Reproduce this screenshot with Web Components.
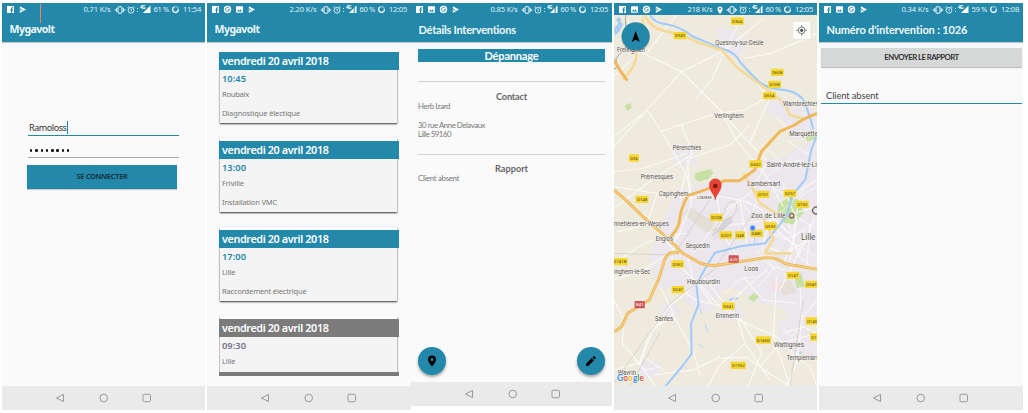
<!DOCTYPE html>
<html lang="fr"><head><meta charset="utf-8"><title>Mygavolt</title>
<style>
html,body{margin:0;background:#fff;height:413px;overflow:hidden}
body{font-family:"Noto Sans","Open Sans",sans-serif;font-size:8px}
</style></head><body>
<app-gallery></app-gallery>

<template id="map">
<style>:host{display:block;height:371px}svg{display:block;width:203px;height:371px}</style>
<svg viewBox="12 45 609 1113" preserveAspectRatio="none" font-family="Roboto,sans-serif">
<rect x="12" y="45" width="609" height="1113" fill="#eeebde"/>
<g fill="#ebe7ec">
<path d="M322 80l50 15 38 45-20 25-45 5-15-40zM470 300l40-5 60 10 51 30v80l-70 5-30-60-50-20z"/>
<path d="M190 430l60 5 15 50-40 20-40-25zM200 570l90-20 110-10 60-60 60-10 101-60v560l-60 10-50-60-60-10-60-40-50-10-40 80-60-20-40-50-60-10-20-90 20-60z"/>
<path d="M140 705l45 10 25 40-25 20-50-20zM155 915l40-10 20 30-35 25-30-15zM90 1085l50-5 20 30-25 25-50-10zM335 910l50 5 20 35-30 15-50-20zM500 960l60-10 61 60v60l-110-20zM480 820l141-20v100l-100-5-30-30zM370 170l10-50 30-8z"/>
</g>
<g fill="#e3dfd6"><path d="M220 640l20-18 70 40 10 30-35 5zM500 850l40-10 20 35-40 12z"/></g>
<path fill="#f5dfe5" d="M480 845l25-5 10 25-25 8z"/>
<g fill="#c7e0a4"><path d="M43 318l18-10 4 15-12 9zM257 518l45-11 8 12-15 18-30 8-12-12zM505 610l35-18 28 8 14 38-32 35-28-5-20-22zM412 895l20-16 16 11-18 15zM585 400l20-10 16 25-30 10zM555 840l18-22 12 42-25 5z"/></g>
<path fill="#a9cdf0" d="M12 85l18-22 10 10-12 22-14 12zM18 60l7-10 10 8-9 12zM355 898l25-8 5 8-25 5zM566 1060l6-8 3 10z"/>
<g fill="none" stroke="#fbfaf5" stroke-width="3.2" stroke-linejoin="round">
<path d="M12 228L90 155 215 215 330 330 400 410 470 480M90 155L45 45M110 160L200 45M215 215L345 150 400 45M215 215L110 330 12 440M345 150l-40 90-50 60M345 150L460 55M405 175l80-15 136-60M12 410l100-80 40 60 80 140 12 80M150 395l60-20 110-35 80-10 80-40M330 330l50 90 90 110 50 90M240 475l120-40 60-60M440 250l40 45-60 130M215 375l30 80-35 130M12 560l130 20 100 15 70-10 100 20 70 40 60 60"/>
<path d="M12 515l90-10 130-45M230 470l15 140-45 110M12 625l120-90 120-75M12 790l90-60 60-20M100 640l90 110-90 60-88 30M200 700l-15 80 70 60 50 70M140 585l-30 90-90 20M320 585l20 120 40 60M390 600l20 130M470 490l-50 90-75 50M480 660l-25 90 40 60M520 560l40 100-20 120M621 620l-140 40-160 20M621 710l-100 50-50-20M500 690l70 60-60 120M460 550l80 40 80-50"/>
<path d="M12 900l30 60-5 70 50 60 40-110 50-60 60-50M87 1090l50 68M87 1090L12 1110M130 980l60-35 60 110 20 70M215 870l40 30 90 20 50 40 60 100-40 98M150 860l40 80-60 50-40 100M260 840l60 70 65 50 115 50 50 50 71 20M280 830l70 90M350 920l60-60 60-50M385 960l20 70 75 110M405 1030l-80 70-30 58M330 1075l80-3 70 50 60 36M130 1125l120-15 80-40M500 830l-10 180 50 148M520 1000l60-20 41 20M570 860l5 100-15 130-30 68M570 960l51-60M450 1100l60-70 111-30M400 830l60 70 100 10M540 1060l60 40 21 58M160 1110l-60-40"/>
</g>
<g fill="none" stroke="#fff" stroke-width="2">
<path d="M400 610l20 30 80 10 80-80M430 630l40-100 80-60M420 690l40-10 60 40 70-30M550 690l20-100 51-30M500 700l121 70M535 670l30 100 56 40M560 650l61 40M550 710l71-50M565 770l50-120M590 800l10-120M520 790l40-90M410 810l60-50 70 80M440 750l50 60M445 860l50-60 60 20M530 420l60 40 31-20M500 350l50 60 71-10M450 430l70 60 60-10M345 880l40-40 50-10M515 980l30 30 30-30M75 1080l30 30 50-10M110 650l40 60 80-10M250 760l70-90 60-60M230 760l20 80"/>
</g>
<g fill="none" stroke="#cac7c4" stroke-width="2"><path d="M12 1150L180 910 310 810 430 640M60 1158l90-160M540 1158l40-260M12 760l180 5 110-170"/><path d="M306 708l38-72q5-30 25-31 16 3 9 28l-31 47-34 38"/></g>
<path d="M306 708l38-50 20-10 4 17-31 26z" fill="#d5d3d7"/>
<path d="M47 45l1 95-30 35 2 28-8 4" fill="none" stroke="#777" stroke-width="2"/>
<g fill="none" stroke="#a0cafa" stroke-width="6" stroke-linejoin="round">
<path d="M120 45q12 24 50 28 42 7 75 35l95 40q35 8 50 38 28 32 60 62 28 20 75 22 46 8 60 38l20 60 4 20M621 405l-18 48-17 85-40 50-16 60-40 50-25 32-70 8-80 20-25 40-17 30-14 25 7 60-23 58 2 90-30 40-52 62"/>
<path stroke-width="2" d="M433 735l2-35M270 925l4 18M285 970l8 28M262 1030l20 14M225 1100l8 8"/>
</g>
<g fill="none" stroke-linejoin="round">
<path stroke="#f5d998" stroke-width="8" d="M103 45q20 37 53 46 68 14 105 35 45 15 75 25l42 49 54 40 60 44 35 30 10 30 42 12M97 55q8 40-17 95 2 50-42 88M400 520l25 40 25 50 65 40M460 655l30 60-25 45 80 0"/>
<path stroke="#efb95b" stroke-width="9" d="M12 180q18 35 40 62M621 340q-43 16-67 35l-45 20-55 60-20 55-46 32-45 0-55 27-55 18q-22 40-25 80-7 25-28 45M12 570q35 28 80 73l100 90 25 26 53 30q30 12 60 5l130-20q40-5 65 17l142 25M207 760q-35-12-45 25l-14 47-30 68-65 40-18 40-22 15"/>
<path stroke="#fbe1a2" stroke-width="2" d="M12 570q35 28 80 73l100 90 25 26 53 30q30 12 60 5l130-20q40-5 65 17l142 25M207 760q-35-12-45 25l-14 47-30 68-65 40-18 40-22 15"/>
</g>
<g id="towns" fill="#55514e" stroke="#f6f4ef" stroke-width="3" paint-order="stroke" font-size="19"></g>
<g id="roads" font-size="13" text-anchor="middle"></g>
<circle cx="545" cy="647" r="9" fill="#8d7775"/><circle cx="545" cy="647" r="4" fill="#e8dedc"/><path d="M621 627a10 10 0 1 0 0 17" transform="translate(2 -4)" fill="none" stroke="#75605c" stroke-width="4"/>
<circle cx="428" cy="684" r="8" fill="#4083ee" stroke="#bdd6fa" stroke-width="2"/>
<path d="M316 600c-3-20-18-24-18-46a18 18 0 0 1 36 0c0 22-15 26-18 46z" fill="#e94335" stroke="#c33127"/><circle cx="316" cy="558" r="7" fill="#7a1b15"/>
<rect x="548" y="64" width="55" height="54" rx="2" fill="#fbfbfa" stroke="#d2d0ca"/>
<g fill="none" stroke="#666" stroke-width="2.6"><circle cx="575" cy="91" r="10"/><path d="M575 75v6M575 101v6M559 91h6M585 91h6"/></g><circle cx="575" cy="91" r="5" fill="#555"/>
<text x="21" y="1142" font-size="26" font-weight="700" textLength="81" lengthAdjust="spacingAndGlyphs" stroke="#fff" stroke-width="3" paint-order="stroke" font-family="Lato,sans-serif"><tspan fill="#4285f4">G</tspan><tspan fill="#ea4335">o</tspan><tspan fill="#fbbc05">o</tspan><tspan fill="#4285f4">g</tspan><tspan fill="#34a853">l</tspan><tspan fill="#ea4335">e</tspan></text>
<circle cx="77" cy="112" r="43" fill="#0003"/><circle cx="77" cy="109" r="42" fill="#2388a9"/><path d="M77 93l12 33-12-7-12 7z" fill="#000"/>
</svg></template>

<script>
const define=(name,css,html,after)=>customElements.define(name,class extends HTMLElement{
  connectedCallback(){
    if(this.shadowRoot)return;
    const root=this.attachShadow({mode:'open'});
    root.innerHTML=`<style>*{box-sizing:border-box}${css}</style>`+(typeof html==='function'?html(this):html);
    if(after)after(this,root);
  }
});

/* One line of text whose tracking is adjusted to span the width in "w". */
define('fit-text',':host{display:inline-block;white-space:pre;line-height:1;flex:none}','<span><slot></slot></span>',(el,root)=>{
  const span=root.querySelector('span'),w=+el.getAttribute('w');
  const natural=span.getBoundingClientRect().width;
  if(w&&natural){span.style.letterSpacing=(w-natural)/el.textContent.length+'px';el.style.width=w+'px'}
});

const glyphs={
  f:'<path fill="#fff" d="M0 0h7v7H5.2V4.5h.9V3.4h-.9v-.6c0-.4.2-.5.9-.5V1.2C4.700 1.100 4 1.600 4 2.700v.7h-.8v1.100H4V7H0z"/>',
  g:'<circle cx="3.500" cy="3.500" r="3.700" fill="#fff"/><path d="M5.200 2.300A2 2 0 1 0 5.500 3.700H3.700" fill="none" stroke="#2388a9" stroke-width=".9"/>',
  i:'<rect y=".3" width="7" height="6.500" rx=".7" fill="#fff"/><path d="M1 5.500l1.500-2 1 1.200 1.100-1.500 1.500 2.300z" fill="#2388a9"/>',
  p:'<path d="M.8.2L7 3.500.8 6.900z" fill="#fff"/><path d="M.5 2l3 2.500M2.200 3.400L.6 5" stroke="#2388a9" stroke-width=".8" fill="none"/>'
};
define('status-bar',
 ':host{display:flex;height:12px;padding:0 4px 0 5px;align-items:center;justify-content:space-between;color:#e2f1f5;font-size:7.600px;background:#2388a9}div{display:flex;align-items:center;padding-top:1px}.l{gap:5px}svg{display:block;overflow:visible;flex:none}',
 el=>{const a=n=>el.getAttribute(n);return `<div class="l">${[...a('icons')].map(k=>`<svg width="7" height="7">${glyphs[k]}</svg>`).join('')}</div>
 <div><fit-text w="${a('sw')||27}">${a('speed')}</fit-text>
 ${el.hasAttribute('pin')?'<svg width="6" height="8" style="margin-left:4px"><path d="M3 8C1 5.500.5 4.500.5 3a2.500 2.500 0 0 1 5 0C5.500 4.500 5 5.500 3 8z" fill="#fff"/><circle cx="3" cy="2.900" r=".9" fill="#2388a9"/></svg>':''}
 <svg width="10" height="8" style="margin-left:4px" fill="none" stroke="#fff"><rect x="3" y=".8" width="4" height="6.400" rx=".7"/><path d="M1.700 2v4M8.300 2v4M.3 3.200v1.600M9.700 3.200v1.600" stroke-width=".9"/></svg>
 <svg width="8" height="8" style="margin-left:2px" fill="none" stroke="#e5f3f6" stroke-width=".9"><circle cx="4" cy="4.300" r="2.900"/><path d="M4 2.500v2l1 .6M.5 1.700L2 .5M7.500 1.700L6 .5"/></svg>
 <svg width="14" height="9" style="margin-left:2px"><path d="M.5 3v1M.5 6v1" stroke="#d5eaf0"/><path d="M13.500 .5v7.500H6z" fill="#fff"/>${el.hasAttribute('weak')?'<path d="M11.200 1v7" stroke="#2388a9" stroke-width="1"/>':''}<text x="3" y="4.300" font-size="4.800" font-weight="700" fill="#fff" textLength="5.500">4G</text></svg>
 <fit-text w="15.500" style="margin-left:3px">${a('level')} %</fit-text>
 <svg width="7" height="7" style="margin-left:3px" fill="none"><circle cx="3.500" cy="3.500" r="2.900" stroke="#88c0d1" stroke-width="1.200"/><path d="M2 1A2.900 2.900 0 1 0 6.400 3.500" stroke="#fff" stroke-width="1.200"/></svg>
 <fit-text w="18" style="margin-left:4px">${a('time')}</fit-text></div>`});

define('title-bar',':host{display:flex;height:27px;align-items:center;padding:1px 8px 0 7.500px;background:#2388a9;color:#f0f8fa;font-size:10.500px;font-weight:700;box-shadow:0 1px 1px #0003;position:relative}','<slot></slot>');

define('nav-bar',':host{display:block;height:24px;background:#eaeaea;flex:none}svg{display:block}',
 '<svg width="204" height="24" fill="none" stroke="#999" stroke-width="1"><path d="M54.500 12l7-3.600v7.200z" stroke-linejoin="round"/><circle cx="101.700" cy="12" r="3.800"/><rect x="141" y="8.300" width="7.500" height="7.400" rx="1.200"/></svg>');

define('phone-screen',':host{display:flex;flex-direction:column;height:407px;background:#fafafa;position:relative;overflow:hidden;flex:none}main{flex:1;min-height:0;overflow:hidden}',
 '<slot name="top"></slot><main><slot></slot></main><nav-bar></nav-bar>');

define('login-form',
 ':host{display:block;padding:78px 0 0 25px;color:#333}.f{display:flex;width:151px;align-items:center;padding-left:1px;margin-left:1px}.u{height:16px;border-bottom:1px solid #2388a9;font-size:9px}.u i{width:1px;height:13px;background:#2388a9}.p{height:22px;border-bottom:1px solid #aaa;gap:2.900px;padding:8px 0 0 2px}.p i{width:2.400px;height:2.400px;border-radius:50%;background:#111}.b{display:flex;align-items:center;justify-content:center;width:150px;height:24px;margin-top:7px;background:#2388a9;color:#102a33;font-size:7.200px;font-weight:600;box-shadow:0 1px 1px #0003}',
 '<div class="f u"><fit-text w="37.500">Ramoloss</fit-text><i></i></div><div class="f p">'+'<i></i>'.repeat(8)+'</div><div class="b"><fit-text w="51">SE CONNECTER</fit-text></div>');

define('visit-card',
 ':host{display:flow-root;height:71px;margin:0 0 18px}.c{position:relative;margin:0 2px 0 1px;height:71px;background:#f4f4f4;box-shadow:0 1px 2px #0008,0 1px 1px #0005}:host(.next) .c{border-top:3px solid #fdfdfd;height:74px;margin-top:-3px}header{display:flex;align-items:center;height:18px;margin:0 -2px 0 -1px;padding-left:3px;background:var(--tone,#2388a9);color:#fff;font-size:10.800px;font-weight:600}.r{display:flex;align-items:center;padding-left:2px;height:15px;color:#777;font-size:7.500px}.t{height:17px;font-size:9.300px;font-weight:600;color:var(--time,#2388a9)}.d{margin-top:4px}',
 el=>`<div class="c"><header><fit-text w="106.500">vendredi 20 avril 2018</fit-text></header><div class="r t"><fit-text w="24">${el.getAttribute('time')}</fit-text></div><div class="r"><fit-text w="${el.getAttribute('cw')}">${el.getAttribute('city')}</fit-text></div><div class="r d"><fit-text w="${el.getAttribute('dw')}">${el.getAttribute('job')}</fit-text></div></div>`);

define('visit-list',
 ':host{display:block;padding:10px 12px 0}.w{height:326px;overflow:hidden;margin:0 -3px;padding:0 3px}.last{height:60px;overflow:hidden;border-bottom:4px solid #7b7b7b;margin-top:-3px;padding-top:3px;--tone:#7b7b7b;--time:#77708f}',
 `<div class="w"><visit-card time="10:45" city="Roubaix" cw="27" job="Diagnostique électique" dw="78"></visit-card>
 <visit-card class="next" time="13:00" city="Friville" cw="22" job="Installation VMC" dw="55"></visit-card>
 <visit-card class="next" time="17:00" city="Lille" cw="13.500" job="Raccordement électrique" dw="84.500"></visit-card>
 <div class="last"><visit-card class="next" time="09:30" city="Lille" cw="13.500" job="" dw="0"></visit-card></div></div>`);

define('round-button',':host{display:grid;place-items:center;width:28px;height:28px;border-radius:50%;background:#2388a9;box-shadow:0 2px 3px #0005}svg{display:block}',
 el=>`<svg width="12" height="12" viewBox="0 0 24 24">${el.getAttribute('kind')==='pin'?'<path d="M12 1a8 8 0 0 0-8 8c0 6 8 14 8 14s8-8 8-14a8 8 0 0 0-8-8zm0 11a3 3 0 1 1 0-6 3 3 0 0 1 0 6z"/>':'<path d="M2 17.500V22h4.500L18 10.500 13.500 6zM21.500 7a1.300 1.300 0 0 0 0-1.700l-2.800-2.800a1.300 1.300 0 0 0-1.700 0L15 4.500 19.500 9z"/>'}</svg>`);

define('visit-details',
 ':host{display:flex;flex-direction:column;height:341px;padding:7px 7px 8px;color:#777;font:7.800px Lato,sans-serif}.b{height:13px;display:grid;place-items:center;background:#2388a9;color:#fff;font-size:11px;font-weight:700}.l{height:1px;background:#d2d2d2}h3{display:grid;place-items:center;height:11px;margin:0;font-size:9.200px;font-weight:700;color:#666}.r{display:flex;align-items:center;height:9.500px}.x{display:flex;justify-content:space-between;margin:auto 0 0}',
 `<div class="b"><fit-text w="54">Dépannage</fit-text></div><div class="l" style="margin:19px 0 9px"></div><h3><fit-text w="31">Contact</fit-text></h3><div class="r"><fit-text w="32">Herb Izard</fit-text></div>
 <div class="r" style="margin-top:9.500px"><fit-text w="67">30 rue Anne Delavaux</fit-text></div><div class="r"><fit-text w="33">Lille 59160</fit-text></div>
 <div class="l" style="margin:14px 0 8px"></div><h3><fit-text w="33">Rapport</fit-text></h3><div class="r"><fit-text w="41">Client absent</fit-text></div>
 <div class="x"><round-button kind="pin"></round-button><round-button kind="pen"></round-button></div>`);

define('report-form',
 ':host{display:block;padding:6px 1px 0 2px;color:#444;font-family:Lato,sans-serif}.b{display:grid;place-items:center;height:19px;background:#d6d7d7;border-radius:1px;box-shadow:0 1px 1px #0004;color:#333;font-size:7.800px;font-weight:700}.f{display:flex;align-items:center;height:18px;margin-top:19px;padding:2px 0 0 5px;border-bottom:1px solid #2388a9;font-size:9.300px}',
 '<div class="b"><fit-text w="74.500">ENVOYER LE RAPPORT</fit-text></div><div class="f"><fit-text w="52.500">Client absent</fit-text></div>');

const towns=[["Frelinghien",21,155,84],["Quesnoy-sur-Deûle",316,134,145],["Wambrechies",519,319,107],["Verlinghem",313,354,88],["Marquette",538,409,86],["Pérenchies",188,450,86],["Saint-André-lez-Lille",470,501,170],["Prémesques",92,537,97],["Lambersart",412,559,99],["Capinghem",147,587,88],["LOMME",261,597,45,12],["Zoo de Lille",423,655,104],["nnetières-en-Weppes",12,678,164],["Lille",573,719,43,25],["Englos",137,724,52],["Sequedin",227,743,72],["inghem-le-Sec",12,823,109],["Loos",403,813,42],["Haubourdin",231,851,99],["Santes",135,962,54],["Emmerin",317,954,70],["Wattignies",492,1042,90],["Templemars",530,1079,97],["Wavrin",23,1124,55]];
const roads=[["D36A",382,63],["D949",210,107],["D608",502,217],["D108",494,253],["D654",478,287],["D36",72,474],["D652",437,492],["D257",540,580],["D751",459,583],["D750",577,613],["D148",96,598],["D208",319,652],["D933",481,678],["D207",348,705],["D48",390,705],["D48C",440,700],["A25",371,777,1],["D141B",30,785],["D952",203,792],["D147",549,826],["D549",604,853],["D241",204,869],["D341",355,918],["N41",89,914,1],["D145D",460,1020],["D145",606,963],["D1",612,1011],["D1952",385,1096]];
customElements.define('road-map',class extends HTMLElement{
  connectedCallback(){
    const root=this.attachShadow({mode:'open'});
    root.append(document.getElementById('map').content.cloneNode(true));
    root.getElementById('towns').innerHTML=towns.map(([n,x,y,w,s])=>`<text x="${x}" y="${y}" textLength="${w}" lengthAdjust="spacingAndGlyphs" font-size="${s||19}">${n}</text>`).join('');
    root.getElementById('roads').innerHTML=roads.map(([n,x,y,red])=>{const w=n.length*7.500+8;return `<rect x="${x-w/2}" y="${y-11}" width="${w}" height="22" rx="2" fill="${red?'#cf5658':'#f7d62e'}"/><text x="${x}" y="${y+5}" fill="${red?'#fff':'#4b4420'}">${n}</text>`}).join('');
  }
});

define('app-gallery',
 ':host{display:flex;align-items:flex-start;height:413px;padding:3px 0 0 2px}.tick{position:absolute;left:38px;top:1px;width:1px;height:19px;background:#e88465;z-index:2}',
 `<phone-screen style="width:203px;margin-right:2px"><status-bar slot="top" icons="fp" speed="0.71 K/s" level="61" time="11:54"></status-bar><title-bar slot="top"><fit-text w="45">Mygavolt</fit-text></title-bar><span class="tick" slot="top"></span><login-form></login-form></phone-screen>
 <phone-screen style="width:204px"><status-bar slot="top" icons="fgip" speed="2.20 K/s" level="60" time="12:05" weak></status-bar><title-bar slot="top"><fit-text w="45">Mygavolt</fit-text></title-bar><visit-list></visit-list></phone-screen>
 <phone-screen style="width:201px;height:403px;margin-right:2px"><status-bar slot="top" icons="figp" speed="0.85 K/s" level="60" time="12:05" weak></status-bar><title-bar slot="top" style="font-family:Lato,sans-serif;font-size:11px"><fit-text w="97.500">Détails Interventions</fit-text></title-bar><visit-details></visit-details></phone-screen>
 <phone-screen style="width:203px;margin-right:2px"><status-bar slot="top" icons="figp" speed="218 K/s" sw="25" level="60" time="12:05" weak pin></status-bar><road-map></road-map></phone-screen>
 <phone-screen style="width:204px"><status-bar slot="top" icons="figp" speed="0.34 K/s" level="59" time="12:08"></status-bar><title-bar slot="top" style="font-family:Lato,sans-serif;font-size:11px"><fit-text w="141">Numéro d'intervention : 1026</fit-text></title-bar><report-form></report-form></phone-screen>`);
</script></body></html>
